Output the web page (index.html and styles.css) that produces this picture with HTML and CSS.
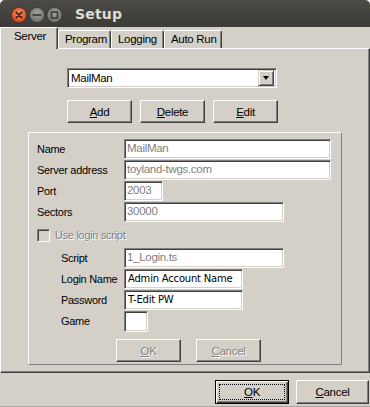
FILE: index.html
```html
<!DOCTYPE html>
<html lang="en">
  <head>
    <meta charset="utf-8" />
    <title>Setup</title>
    <link rel="stylesheet" href="styles.css">
  </head>
  <body>
    <div class="window">
      <!-- Title bar -->
      <header class="titlebar">
        <svg class="titlebar__btns" width="64" height="18" viewBox="0 0 64 18">
          <defs>
            <radialGradient id="orange" cx="50%" cy="35%" r="65%">
              <stop offset="0" stop-color="#f88b5c" />
              <stop offset="1" stop-color="#d9461a" />
            </radialGradient>
            <radialGradient id="grey" cx="50%" cy="35%" r="65%">
              <stop offset="0" stop-color="#a09f99" />
              <stop offset="1" stop-color="#6f6e69" />
            </radialGradient>
          </defs>
          <circle cx="8" cy="9" r="7.5" fill="url(#orange)" stroke="#3b2a20" stroke-width="0.6" />
          <path d="M5.3 6.3l5.4 5.4M10.7 6.3l-5.4 5.4" stroke="#3c2218" stroke-width="1.7" stroke-linecap="round" />
          <circle cx="26" cy="9" r="7.5" fill="url(#grey)" stroke="#2e2d29" stroke-width="0.6" />
          <path d="M22.3 9h7.4" stroke="#33322e" stroke-width="1.7" stroke-linecap="round" />
          <circle cx="43.5" cy="9" r="7.5" fill="url(#grey)" stroke="#2e2d29" stroke-width="0.6" />
          <rect x="40.5" y="6" width="6" height="6" fill="none" stroke="#33322e" stroke-width="1.4" />
        </svg>
        <h1 class="titlebar__title">Setup</h1>
      </header>

      <!-- Tabs -->
      <nav class="tabs">
        <span class="tab tab--active">Server</span>
        <span class="tab tab--program">Program</span>
        <span class="tab tab--logging">Logging</span>
        <span class="tab tab--autorun">Auto Run</span>
      </nav>

      <!-- Server tab page -->
      <main class="panel">
        <div class="combo">
          <span class="combo__value">MailMan</span>
          <span class="combo__arrow"></span>
        </div>

        <div class="btn-row">
          <button class="btn btn--wide"><u>A</u>dd</button>
          <button class="btn btn--wide"><u>D</u>elete</button>
          <button class="btn btn--wide"><u>E</u>dit</button>
        </div>

        <section class="group">
          <div class="field">
            <label class="field__label">Name</label>
            <span class="input input--disabled input--long">MailMan</span>
          </div>
          <div class="field">
            <label class="field__label">Server address</label>
            <span class="input input--disabled input--long">toyland-twgs.com</span>
          </div>
          <div class="field">
            <label class="field__label">Port</label>
            <span class="input input--disabled input--port">2003</span>
          </div>
          <div class="field">
            <label class="field__label">Sectors</label>
            <span class="input input--disabled input--mid">30000</span>
          </div>

          <div class="check">
            <span class="check__box"></span>
            <span class="check__text">Use login script</span>
          </div>

          <div class="field field--sub">
            <label class="field__label">Script</label>
            <span class="input input--disabled input--mid">1_Login.ts</span>
          </div>
          <div class="field field--sub">
            <label class="field__label">Login Name</label>
            <span class="input input--text input--short">Admin Account Name</span>
          </div>
          <div class="field field--sub">
            <label class="field__label">Password</label>
            <span class="input input--text input--short">T-Edit PW</span>
          </div>
          <div class="field field--sub">
            <label class="field__label">Game</label>
            <span class="input input--game"></span>
          </div>

          <div class="group__actions">
            <button class="btn btn--disabled"><u>O</u>K</button>
            <button class="btn btn--disabled"><u>C</u>ancel</button>
          </div>
        </section>
      </main>

      <!-- Dialog buttons -->
      <footer class="footer">
        <button class="btn btn--default"><span class="btn__focus"><u>O</u>K</span></button>
        <button class="btn btn--footer"><u>C</u>ancel</button>
      </footer>
    </div>
  </body>
</html>
```

FILE: styles.css
```css
/* Base */
html { box-sizing: border-box; }
*, *:before, *:after { box-sizing: inherit; }
body {
  margin: 0;
  background: #fff;
  font-family: "Liberation Sans", Arial, sans-serif;
  font-size: 11px;
  letter-spacing: -0.3px;
  color: #000;
}
.window {
  width: 370px;
  height: 407px;
  background: #d4d0c8;
  display: flex;
  flex-direction: column;
  border-radius: 5px 5px 0 0;
  overflow: hidden;
  border-bottom: 1px solid #a8a59d;
}

/* Title bar */
.titlebar {
  height: 27px;
  flex: none;
  display: flex;
  align-items: center;
  padding-left: 11px;
  background: linear-gradient(#4b4a45, #3c3b37);
}
.titlebar__btns { display: block; margin-top: 2px; }
.titlebar__title {
  margin: 1px 0 0 0;
  font-family: "DejaVu Sans", sans-serif;
  font-size: 14px;
  font-weight: bold;
  letter-spacing: 0.2px;
  color: #dfdbd2;
}

/* Tabs */
.tabs {
  height: 21px;
  flex: none;
  display: flex;
  align-items: flex-end;
  position: relative;
  z-index: 1;
}
.tab {
  height: 18px;
  line-height: 16px;
  padding-left: 6px;
  border: 1px solid;
  border-color: #fff #404040 transparent #fff;
  border-bottom: 0;
  border-radius: 2px 2px 0 0;
  box-shadow: inset -1px 0 #808080;
  font-size: 11.5px;
}
.tab--active {
  width: 58px;
  height: 22px;
  margin-bottom: -1px;
  padding-left: 13px;
  line-height: 17px;
  background: #d4d0c8;
}
.tab--program { width: 53px; }
.tab--logging { width: 53px; }
.tab--autorun { width: 58px; }

/* Tab page */
.panel {
  height: 325px;
  flex: none;
  width: 370px;
  border: 1px solid;
  border-color: #fff #404040 #404040 #fff;
  box-shadow: inset -1px -1px #808080;
  padding: 19px 0 0 66px;
}

/* Combo box */
.combo {
  width: 210px;
  height: 20px;
  display: flex;
  align-items: center;
  justify-content: space-between;
  background: #fff;
  border: 1px solid;
  border-color: #808080 #fff #fff #808080;
  box-shadow: inset 1px 1px #404040, inset -1px -1px #d4d0c8;
  padding: 0 2px 0 3px;
  font-size: 11.5px;
}
.combo__arrow {
  width: 16px;
  height: 16px;
  background: #d4d0c8;
  border: 1px solid;
  border-color: #d4d0c8 #404040 #404040 #d4d0c8;
  box-shadow: inset 1px 1px #fff, inset -1px -1px #808080;
  position: relative;
}
.combo__arrow:after {
  content: "";
  position: absolute;
  left: 4px;
  top: 5px;
  border-left: 3.5px solid transparent;
  border-right: 3.5px solid transparent;
  border-top: 4px solid #000;
}

/* Buttons */
.btn {
  height: 23px;
  padding: 0;
  background: #d4d0c8;
  border: 1px solid;
  border-color: #fff #404040 #404040 #fff;
  box-shadow: inset -1px -1px #808080;
  font-family: inherit;
  font-size: 11.5px;
  letter-spacing: -0.3px;
  color: #000;
}
.btn-row {
  display: flex;
  gap: 8px;
  margin-top: 12px;
}
.btn--wide { width: 65px; }
.btn--disabled {
  width: 65px;
  color: #808080;
  text-shadow: 1px 1px #fff;
}

/* Group box */
.group {
  width: 314px;
  height: 233px;
  margin: 9px 0 0 -39px;
  border: 1px solid;
  border-color: #fff #808080 #808080 #fff;
  padding: 6px 0 0 8px;
  display: flex;
  flex-direction: column;
  gap: 1px;
}
.field {
  display: flex;
  align-items: center;
  height: 20px;
}
.field__label {
  width: 87px;
}
.field--sub .field__label {
  width: 63px;
  margin-left: 24px;
}
.input {
  height: 20px;
  line-height: 17px;
  padding-left: 2px;
  background: #fff;
  border: 1px solid;
  border-color: #808080 #fff #fff #808080;
  box-shadow: inset 1px 1px #404040, inset -1px -1px #d4d0c8;
  white-space: nowrap;
  overflow: hidden;
}
.input--disabled { color: #808080; font-size: 11.5px; }
.input--text {
  padding-left: 3px;
  font-family: "DejaVu Sans", sans-serif;
  font-size: 10px;
  letter-spacing: -0.2px;
}
.input--long { width: 207px; }
.input--mid { width: 160px; }
.input--port { width: 39px; }
.input--short { width: 119px; }
.input--game { width: 24px; height: 21px; }

/* Checkbox */
.check {
  height: 24px;
  display: flex;
  align-items: center;
}
.check__box {
  width: 13px;
  height: 13px;
  border: 1px solid;
  border-color: #808080 #fff #fff #808080;
  box-shadow: inset 1px 1px #404040, inset -1px -1px #d4d0c8;
  background: #d4d0c8;
}
.check__text {
  margin-left: 5px;
  color: #808080;
  text-shadow: 1px 1px #fff;
}

.group__actions {
  display: flex;
  gap: 15px;
  margin: 7px 0 0 79px;
}

/* Footer */
.footer {
  flex: 1;
  display: flex;
  justify-content: flex-end;
  align-items: flex-start;
  gap: 7px;
  padding: 7px 1px 0 0;
}
.btn--default {
  width: 74px;
  height: 24px;
  border: 1px solid #000;
  box-shadow: inset 1px 1px #fff, inset -1px -1px #404040, inset -2px -2px #808080;
  padding: 3px;
}
.btn__focus {
  display: block;
  height: 100%;
  line-height: 14px;
  border: 1px dotted #000;
}
.btn--footer { width: 73px; height: 24px; }
```
